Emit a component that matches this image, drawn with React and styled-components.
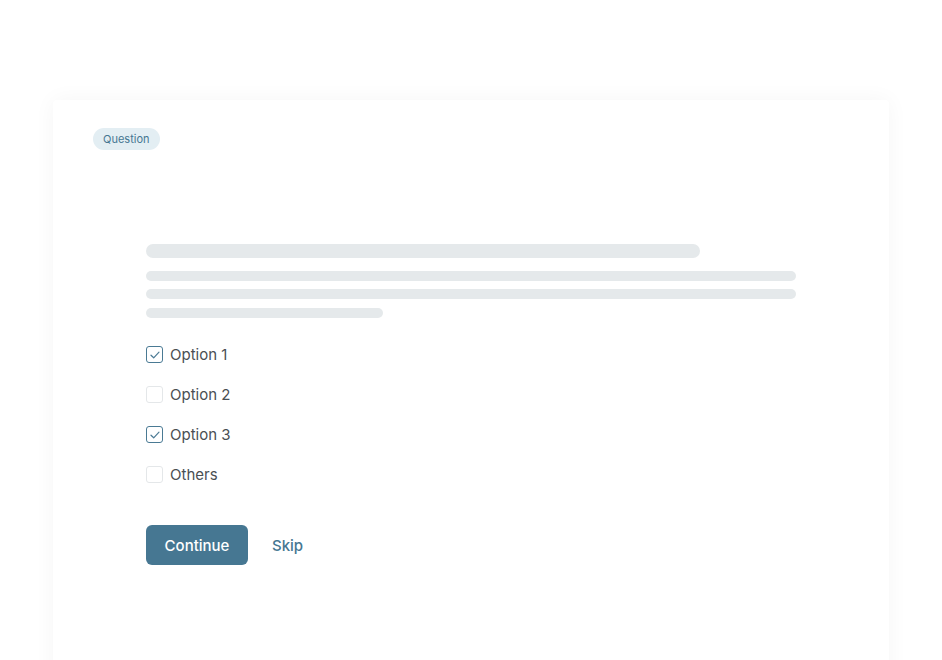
import React, { useState } from 'react';
import styled, { createGlobalStyle } from 'styled-components';

const GlobalStyle = createGlobalStyle`
  html, body {
    margin: 0;
    padding: 0;
    background: #ffffff;
    font-family: 'Inter', 'Noto Sans', sans-serif;
  }
  * { box-sizing: border-box; }
`;

const Page = styled.div`
  width: 942px;
  height: 660px;
  overflow: hidden;
  padding: 100px 53px 0;
`;

const Card = styled.div`
  background: #fff;
  height: 620px;
  border-radius: 4px;
  box-shadow: 0 0 22px rgba(0, 0, 0, 0.045);
  padding: 27px 40px 0;
`;

const Badge = styled.span`
  display: inline-flex;
  align-items: center;
  height: 22px;
  padding: 0 10px;
  border-radius: 11px;
  background: #e3eef3;
  color: #467792;
  font-size: 11px;
  font-weight: 400;
`;

const Body = styled.div`
  padding: 94px 53px 0;
`;

const Skeleton = styled.div`
  width: ${p => p.$w}px;
  height: ${p => p.$h}px;
  border-radius: ${p => p.$h / 2}px;
  background: #e5e9eb;
  margin-bottom: ${p => p.$mb}px;
`;

const Options = styled.div`
  margin-top: 28px;
  display: flex;
  flex-direction: column;
  gap: 23px;
`;

const Row = styled.label`
  display: flex;
  align-items: center;
  gap: 7px;
  height: 17px;
  cursor: pointer;
  color: #4a4f54;
  font-size: 15px;
  font-weight: 400;
`;

const Box = styled.span`
  width: 17px;
  height: 17px;
  border-radius: 3px;
  border: 1.5px solid ${p => (p.$on ? '#4a7a94' : '#e4e7e9')};
  display: flex;
  align-items: center;
  justify-content: center;
  background: #fff;
`;

const Actions = styled.div`
  margin-top: 42px;
  display: flex;
  align-items: center;
  gap: 24px;
`;

const Primary = styled.button`
  width: 102px;
  height: 40px;
  border: none;
  border-radius: 6px;
  background: #467792;
  color: #fff;
  font-family: inherit;
  font-size: 15px;
  font-weight: 500;
  cursor: pointer;
`;

const Link = styled.button`
  border: none;
  background: none;
  padding: 0;
  color: #467792;
  font-family: inherit;
  font-size: 15px;
  font-weight: 500;
  cursor: pointer;
`;

const Check = () => (
  <svg width="10" height="8" viewBox="0 0 10 8" fill="none">
    <path d="M1 4.2 L3.7 6.8 L9 1.2" stroke="#4a7a94" strokeWidth="1.2" strokeLinecap="round" strokeLinejoin="round" />
  </svg>
);

const initial = [
  { label: 'Option 1', on: true },
  { label: 'Option 2', on: false },
  { label: 'Option 3', on: true },
  { label: 'Others', on: false },
];

export default function App() {
  const [opts, setOpts] = useState(initial);

  const toggle = i =>
    setOpts(opts.map((o, j) => (j === i ? { ...o, on: !o.on } : o)));

  return (
    <Page>
      <GlobalStyle />
      <Card>
        <Badge>Question</Badge>
        <Body>
          <Skeleton $w={554} $h={14} $mb={13} />
          <Skeleton $w={650} $h={10} $mb={8} />
          <Skeleton $w={650} $h={10} $mb={9} />
          <Skeleton $w={237} $h={10} $mb={0} />
          <Options>
            {opts.map((o, i) => (
              <Row key={o.label} onClick={() => toggle(i)}>
                <Box $on={o.on}>{o.on && <Check />}</Box>
                {o.label}
              </Row>
            ))}
          </Options>
          <Actions>
            <Primary>Continue</Primary>
            <Link>Skip</Link>
          </Actions>
        </Body>
      </Card>
    </Page>
  );
}
